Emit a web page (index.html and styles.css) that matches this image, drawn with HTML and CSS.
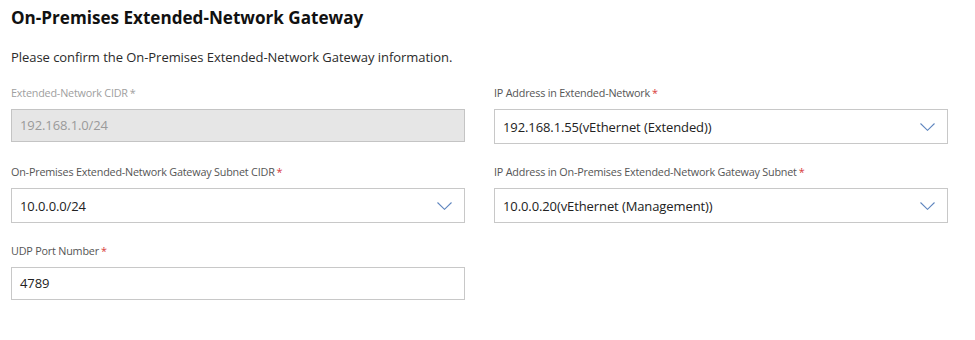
FILE: index.html
```html
<!DOCTYPE html>
<html lang="en">
<head>
<meta charset="utf-8">
<title>On-Premises Extended-Network Gateway</title>
<link rel="stylesheet" href="styles.css">
</head>
<body>
<main class="page">
  <h1 class="title">On-Premises Extended-Network Gateway</h1>
  <p class="intro">Please confirm the On-Premises Extended-Network Gateway information.</p>
  <div class="form-grid">
    <div class="field">
      <label class="field-label disabled-label">Extended-Network CIDR<span class="req-muted">*</span></label>
      <div class="input is-disabled">192.168.1.0/24</div>
    </div>
    <div class="field">
      <label class="field-label">IP Address in Extended-Network<span class="req">*</span></label>
      <div class="select">
        <span class="select-value">192.168.1.55(vEthernet (Extended))</span>
        <svg class="chevron" width="15" height="8" viewBox="0 0 15 8"><polyline points="0.5,0.5 7.5,7.3 14.5,0.5" fill="none" stroke="#5f86bf" stroke-width="1.1"/></svg>
      </div>
    </div>
    <div class="field">
      <label class="field-label">On-Premises Extended-Network Gateway Subnet CIDR<span class="req">*</span></label>
      <div class="select">
        <span class="select-value">10.0.0.0/24</span>
        <svg class="chevron" width="15" height="8" viewBox="0 0 15 8"><polyline points="0.5,0.5 7.5,7.3 14.5,0.5" fill="none" stroke="#5f86bf" stroke-width="1.1"/></svg>
      </div>
    </div>
    <div class="field">
      <label class="field-label">IP Address in On-Premises Extended-Network Gateway Subnet<span class="req">*</span></label>
      <div class="select">
        <span class="select-value">10.0.0.20(vEthernet (Management))</span>
        <svg class="chevron" width="15" height="8" viewBox="0 0 15 8"><polyline points="0.5,0.5 7.5,7.3 14.5,0.5" fill="none" stroke="#5f86bf" stroke-width="1.1"/></svg>
      </div>
    </div>
    <div class="field">
      <label class="field-label">UDP Port Number<span class="req">*</span></label>
      <div class="input">4789</div>
    </div>
  </div>
</main>
</body>
</html>
```
FILE: styles.css
```css
* { box-sizing: border-box; }

html, body {
  margin: 0;
  background: #ffffff;
}

body {
  font-family: "Segoe UI", "Open Sans", "Noto Sans", sans-serif;
  color: #1f1f1f;
}

.page {
  padding: 6px 0 0 11px;
  width: 975px;
}

.title {
  margin: 0;
  font-size: 17.1px;
  line-height: 24px;
  font-weight: 700;
  color: #111111;
}

.intro {
  margin: 17px 0 0;
  font-size: 13px;
  letter-spacing: -0.05px;
  line-height: 20px;
  color: #2b2b2b;
}

.form-grid {
  margin-top: 18px;
  display: grid;
  grid-template-columns: 454px 454px;
  column-gap: 29px;
  row-gap: 20px;
  align-items: start;
}

.field {
  display: flex;
  flex-direction: column;
}

.field-label {
  font-size: 10.8px;
  letter-spacing: -0.2px;
  line-height: 16px;
  color: #555555;
  margin-bottom: 8px;
}

.disabled-label {
  color: #a0a0a0;
}

.req {
  color: #d83b3b;
  margin-left: 2px;
}

.req-muted {
  color: #a0a0a0;
  margin-left: 2px;
}

.input {
  height: 33px;
  border: 1px solid #c8c8c8;
  padding: 0 8px;
  font-size: 13px;
  letter-spacing: -0.1px;
  line-height: 31px;
  color: #222222;
}

.input.is-disabled {
  background: #e6e6e6;
  color: #9a9a9a;
  border-color: #c4c4c4;
}

.select {
  height: 35px;
  border: 1px solid #c8c8c8;
  padding: 0 12px 0 8px;
  display: flex;
  align-items: center;
  justify-content: space-between;
  font-size: 13px;
  letter-spacing: -0.1px;
  color: #222222;
}

.chevron {
  flex: none;
  margin-top: 1px;
}
```
